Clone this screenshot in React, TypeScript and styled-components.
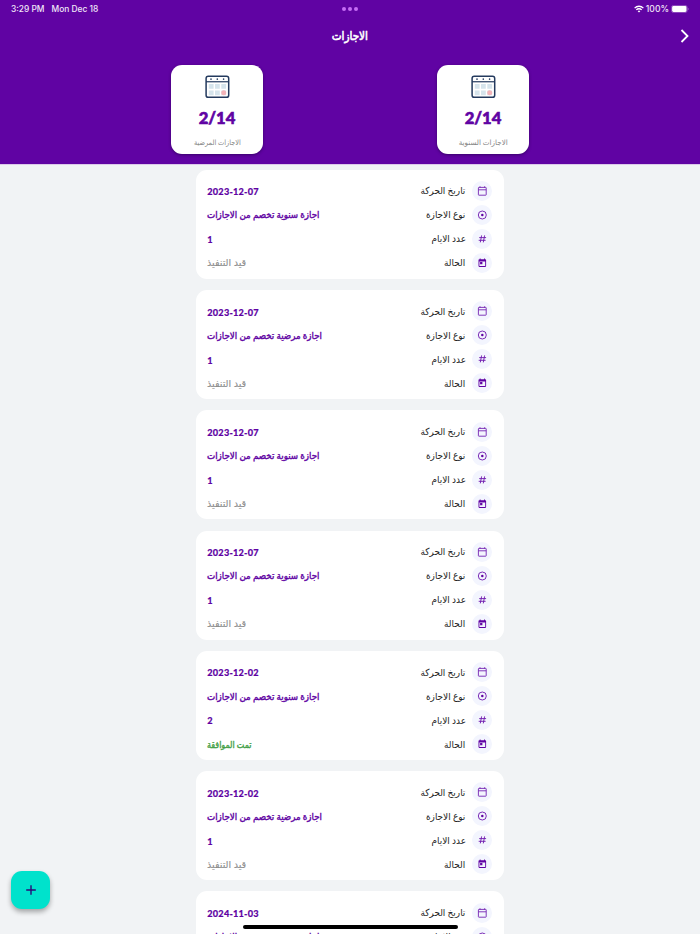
import React from "react";
import styled, { createGlobalStyle } from "styled-components";

const PURPLE = "#6003a3";
const LATIN = `Inter, "Liberation Sans", sans-serif`;
const ARABIC = `Lato, "DejaVu Sans", sans-serif`;

const GlobalStyle = createGlobalStyle`
  * { box-sizing: border-box; }
  body { margin: 0; background: #f1f3f5; overflow: hidden; }
`;

const Screen = styled.div`
  position: relative;
  width: 700px;
  height: 934px;
  overflow: hidden;
  background: #f1f3f5;
  font-family: ${ARABIC};
`;

const Header = styled.header`
  height: 165px;
  border-bottom: 1px solid #dcc9ea;
  background: ${PURPLE};
  color: #fff;
`;

const StatusBar = styled.div`
  display: grid;
  grid-template-columns: 1fr auto 1fr;
  align-items: center;
  height: 17px;
  padding: 0 11px;
  font: 500 8.4px/17px ${LATIN};
  color: #f1e6f8;
`;

const StatusTime = styled.div`
  display: flex;
  gap: 7px;
  padding-top: 1px;
`;

const Dots = styled.div`
  display: flex;
  gap: 2px;
  i { width: 4px; height: 4px; border-radius: 50%; background: #c66df5; }
`;

const StatusRight = styled.div`
  display: flex;
  align-items: center;
  justify-content: flex-end;
  gap: 2px;
  font-size: 8.6px;
  span { padding-top: 1px; }
`;

const TitleBar = styled.div`
  display: grid;
  grid-template-columns: 30px 1fr 30px;
  align-items: center;
  height: 38px;
`;

const Title = styled.h1`
  grid-column: 2;
  margin: 0;
  text-align: center;
  font-size: 12px;
  line-height: 20px;
  font-weight: 400;
  -webkit-text-stroke: 0.6px currentColor;
`;

const Back = styled.button`
  display: flex;
  justify-content: center;
  padding: 0;
  border: 0;
  background: none;
`;

const Fit = styled.span<{ $x?: number; $from?: string }>`
  display: inline-block;
  white-space: nowrap;
  transform: scaleX(${(p) => p.$x ?? 1});
  transform-origin: ${(p) => p.$from ?? "center"};
`;

const Summary = styled.div`
  display: flex;
  justify-content: center;
  gap: 174px;
  padding-top: 10.4px;
`;

const SummaryCard = styled.div`
  display: flex;
  flex-direction: column;
  align-items: center;
  width: 92px;
  height: 89px;
  padding-top: 10px;
  border-radius: 11px;
  background: #fff;
  box-shadow: 0 1px 3px rgba(20, 0, 50, 0.5);
`;

const Count = styled.strong`
  margin-top: 8px;
  font: 900 16.6px/22px Lato, sans-serif;
  color: ${PURPLE};
  -webkit-text-stroke: 0.6px ${PURPLE};
`;

const Caption = styled.span`
  margin-top: 6px;
  font-size: 7.4px;
  line-height: 16px;
  color: #858585;
`;

const List = styled.main`
  display: flex;
  flex-direction: column;
  align-items: center;
  gap: 11.3px;
  padding-top: 4.7px;
`;

const Card = styled.article`
  flex: none;
  width: 308px;
  height: 109px;
  padding: 11.3px 12px 0 11px;
  border-radius: 11px;
  background: #fff;
`;

const Row = styled.div`
  display: flex;
  align-items: center;
  justify-content: space-between;
  height: 20px;
  margin-bottom: 4px;
`;

const Label = styled.div`
  display: flex;
  align-items: center;
  gap: 6.5px;
  font-size: 9.8px;
  line-height: 19px;
  color: #222;
`;

const Bubble = styled.span`
  display: grid;
  place-items: center;
  width: 20px;
  height: 20px;
  border-radius: 50%;
  background: #f3f5fe;
`;

const Value = styled.span<{ $color?: string; $stroke?: number }>`
  padding-left: 0.3px;
  font-size: 9.8px;
  line-height: 19px;
  color: ${(p) => p.$color ?? PURPLE};
  -webkit-text-stroke: ${(p) => p.$stroke ?? 0.4}px currentColor;
`;

const NumberValue = styled(Value)`
  padding-top: 1.6px;
  font-weight: 900;
  font-size: 9.2px;
  letter-spacing: 0.2px;
  -webkit-text-stroke-width: 0.15px;
`;

const AddButton = styled.button`
  position: absolute;
  left: 11px;
  top: 870.5px;
  display: grid;
  place-items: center;
  width: 39px;
  height: 38.5px;
  padding: 0;
  border: 0;
  border-radius: 11px;
  background: #00e2cc;
  box-shadow: 0 3px 5px rgba(0, 0, 0, 0.32);
`;

const HomeIndicator = styled.div`
  position: absolute;
  left: 242.5px;
  top: 924.5px;
  width: 215px;
  height: 4px;
  border-radius: 2px;
  background: #000;
`;

const Calendar = () => (
  <svg width="25" height="24" viewBox="0 0 25 23.5" fill="none">
    <rect x="1.1" y="1.1" width="22.6" height="21" rx="2.2" stroke="#243a5e" strokeWidth="1.5" />
    <path d="M1 6.5h22.6" stroke="#243a5e" strokeWidth="1.2" />
    <g fill="#243a5e">
      <circle cx="6" cy="3.9" r=".8" />
      <circle cx="12.3" cy="3.9" r=".8" />
      <circle cx="18.6" cy="3.9" r=".8" />
    </g>
    <path
      fill="#d6e4ec"
      d="M3.8 8.8h4.8v4.8H3.8zM10 8.8h4.8v4.8H10zM16.3 8.8h4.8v4.8h-4.8zM3.8 15.2h4.8V20H3.8zM10 15.2h4.8V20H10zM16.3 15.2h4.8V20h-4.8z"
    />
    <circle cx="18.7" cy="17.6" r="2.5" fill="#f3b3b8" />
  </svg>
);

const DateIcon = () => (
  <svg width="10" height="10" viewBox="0 0 10 10" fill="none" stroke="#7424b2" strokeWidth=".9">
    <rect x="1.4" y="1.4" width="7.8" height="7.8" rx=".5" />
    <path d="M1.4 3.8h7.8M3 .3v1.4M7.6 .3v1.4" />
  </svg>
);

const TypeIcon = () => (
  <svg width="10" height="10" viewBox="0 0 10 10">
    <circle cx="5.3" cy="5" r="4" fill="none" stroke="#6d16ae" strokeWidth=".9" />
    <circle cx="5.3" cy="5" r="1.25" fill="#6003a3" />
  </svg>
);

const DaysIcon = () => (
  <svg width="10" height="10" viewBox="0 0 10 10" fill="none" stroke="#6d16ae" strokeWidth=".9">
    <path d="M4.6 1.4 3.3 8.4M7.6 1.4 6.3 8.4M2.2 3.6h6.9M1.7 6.3h6.9" />
  </svg>
);

const StateIcon = () => (
  <svg width="10" height="10" viewBox="0 0 10 10">
    <path
      transform="translate(.3 -.1)"
      fill="#6003a3"
      fillRule="evenodd"
      d="M2.4.5h.9v.8h3.4V.5h.9v.8h.4c.5 0 .8.3.8.8v6.1c0 .5-.3.8-.8.8H2c-.5 0-.8-.3-.8-.8V2.1c0-.5.3-.8.8-.8h.4zM2.1 3.5v4.6h5.8V3.5zM2.8 4.2h2.3v2.2H2.8z"
    />
  </svg>
);

const ANNUAL = { text: "اجازة سنوية تخصم من الاجازات", x: 0.888 };
const SICK = { text: "اجازة مرضية تخصم من الاجازات", x: 0.887 };

const LEAVES = [
  { date: "2023-12-07", type: ANNUAL, days: 1, approved: false },
  { date: "2023-12-07", type: SICK, days: 1, approved: false },
  { date: "2023-12-07", type: ANNUAL, days: 1, approved: false },
  { date: "2023-12-07", type: ANNUAL, days: 1, approved: false },
  { date: "2023-12-02", type: ANNUAL, days: 2, approved: true },
  { date: "2023-12-02", type: SICK, days: 1, approved: false },
  { date: "2024-11-03", type: ANNUAL, days: 1, approved: false },
];

type FieldProps = { icon: React.ReactNode; label: string; children: React.ReactNode };

const Field = ({ icon, label, children }: FieldProps) => (
  <Row>
    {children}
    <Label>
      <Fit dir="rtl" $x={0.91} $from="right">{label}</Fit>
      <Bubble>{icon}</Bubble>
    </Label>
  </Row>
);

const LeaveCard = ({ leave }: { leave: (typeof LEAVES)[number] }) => (
  <Card>
    <Field icon={<DateIcon />} label="تاريخ الحركة">
      <NumberValue>{leave.date}</NumberValue>
    </Field>
    <Field icon={<TypeIcon />} label="نوع الاجازة">
      <Value dir="rtl"><Fit $x={leave.type.x} $from="left">{leave.type.text}</Fit></Value>
    </Field>
    <Field icon={<DaysIcon />} label="عدد الايام">
      <NumberValue>{leave.days}</NumberValue>
    </Field>
    <Field icon={<StateIcon />} label="الحالة">
      {leave.approved ? (
        <Value dir="rtl" $color="#43a047"><Fit $x={0.815} $from="left">تمت الموافقة</Fit></Value>
      ) : (
        <Value dir="rtl" $color="#8c8c8c" $stroke={0.1}><Fit $x={0.98} $from="left">قيد التنفيذ</Fit></Value>
      )}
    </Field>
  </Card>
);

export default function App() {
  return (
    <>
      <GlobalStyle />
      <Screen>
        <Header>
          <StatusBar>
            <StatusTime><span>3:29 PM</span><span>Mon Dec 18</span></StatusTime>
            <Dots><i /><i /><i /></Dots>
            <StatusRight>
              <svg width="10" height="8" viewBox="0 0 10 8" fill="none" stroke="#fff" strokeWidth="1.3">
                <path d="M.6 3.1a6.2 6.2 0 0 1 8.8 0M2.3 4.9a3.8 3.8 0 0 1 5.4 0" />
                <path d="M5 7.6 3.7 6.3a1.8 1.8 0 0 1 2.6 0z" fill="#fff" stroke="none" />
              </svg>
              <span>100%</span>
              <svg width="18" height="8" viewBox="0 0 18 8">
                <rect x=".4" y=".4" width="15.8" height="7.2" rx="2.2" fill="none" stroke="#a56dcb" strokeWidth=".7" />
                <rect x="1.1" y="1.1" width="14.4" height="5.8" rx="1.3" fill="#fff" />
                <path d="M16.9 2.8c1 .4 1 2 0 2.4z" fill="#a56dcb" />
              </svg>
            </StatusRight>
          </StatusBar>
          <TitleBar>
            <Title><Fit dir="rtl" $x={0.87}>الاجازات</Fit></Title>
            <Back aria-label="رجوع">
              <svg width="10" height="14" viewBox="0 0 10 14" fill="none" stroke="#fff" strokeWidth="1.8">
                <path d="m1.5 1 6 6-6 6" />
              </svg>
            </Back>
          </TitleBar>
          <Summary>
            <SummaryCard>
              <Calendar />
              <Count>2/14</Count>
              <Caption dir="rtl"><Fit $x={0.89}>الاجازات المرضية</Fit></Caption>
            </SummaryCard>
            <SummaryCard>
              <Calendar />
              <Count>2/14</Count>
              <Caption dir="rtl"><Fit $x={0.97}>الاجازات السنوية</Fit></Caption>
            </SummaryCard>
          </Summary>
        </Header>
        <List>
          {LEAVES.map((leave, i) => <LeaveCard key={i} leave={leave} />)}
        </List>
        <AddButton aria-label="اضافة">
          <svg width="10" height="10" viewBox="0 0 10 10" stroke="#2b0a78" strokeWidth="1.4">
            <path d="M5 .2v9.6M.2 5h9.6" />
          </svg>
        </AddButton>
        <HomeIndicator />
      </Screen>
    </>
  );
}
